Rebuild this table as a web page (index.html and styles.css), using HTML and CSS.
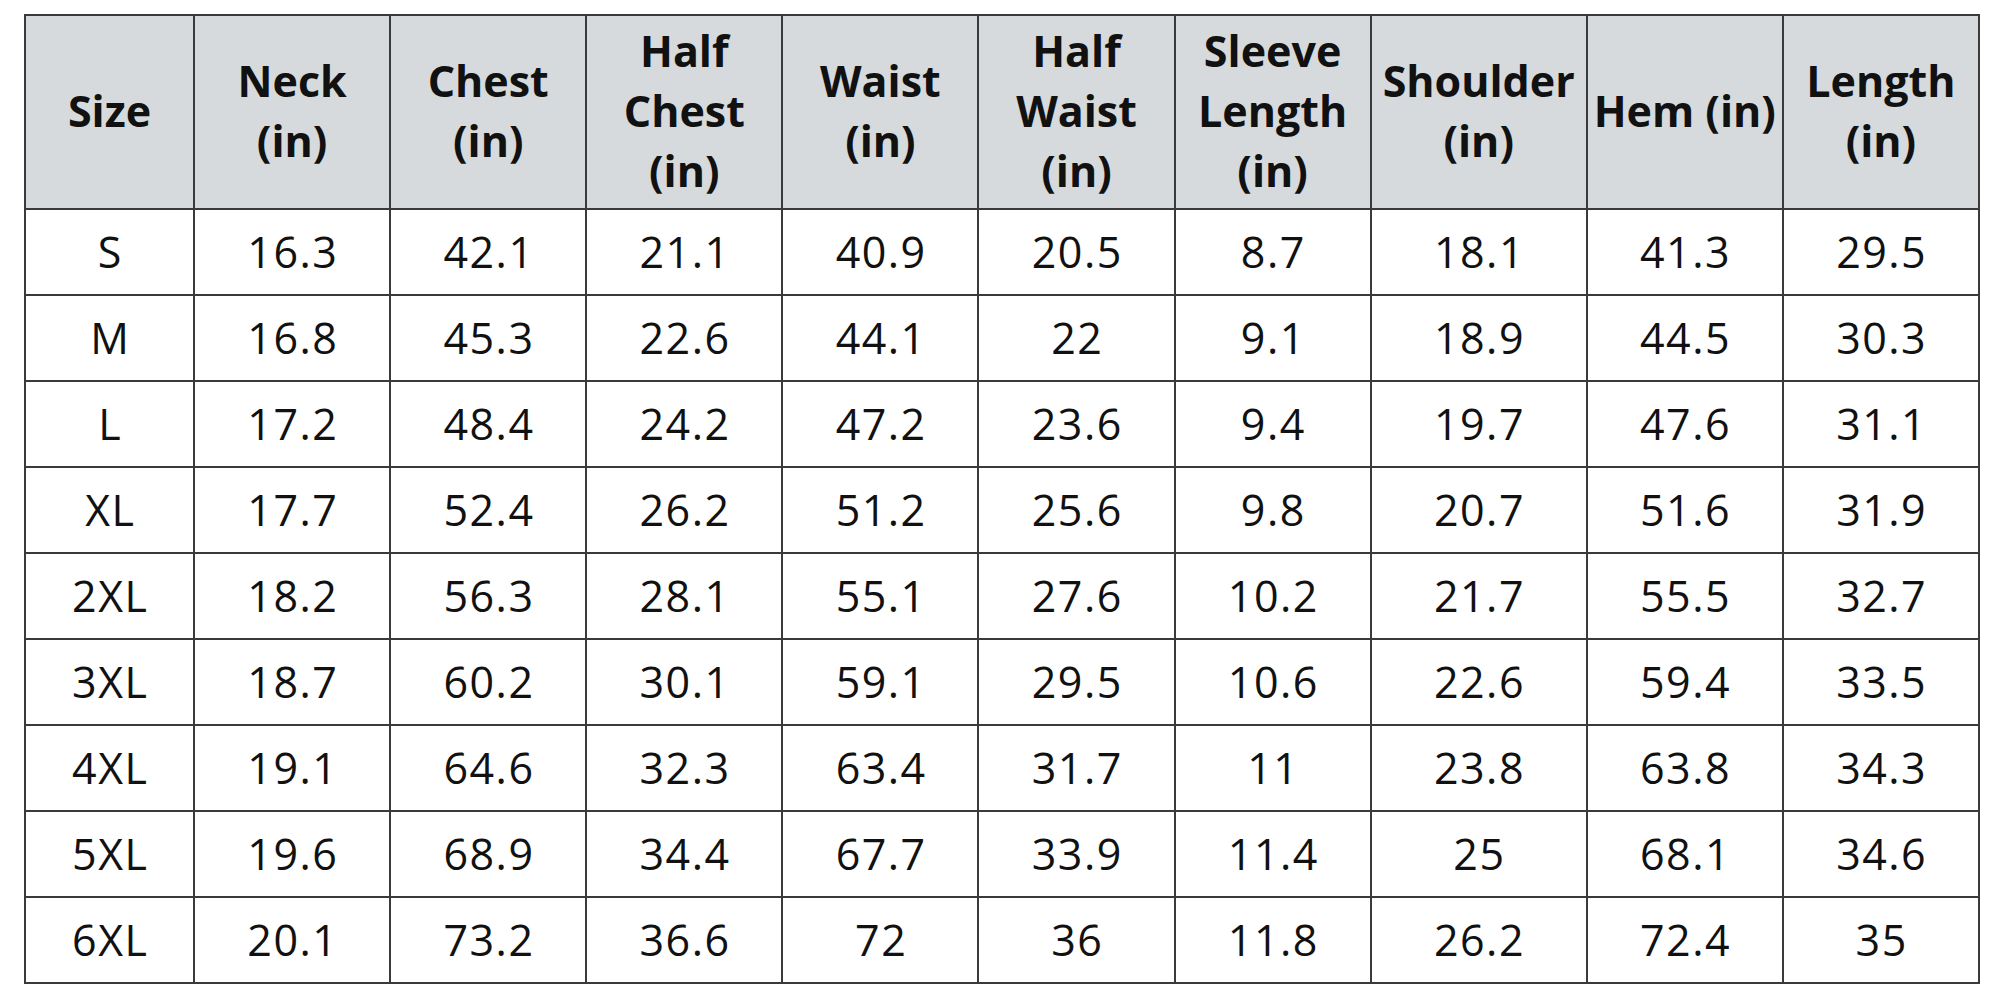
FILE: index.html
```html
<!DOCTYPE html>
<html>
<head>
<meta charset="utf-8">
<link rel="stylesheet" href="styles.css">
</head>
<body>
<table class="sizes">
<colgroup>
<col class="c-size"><col class="c-std"><col class="c-std"><col class="c-std"><col class="c-std"><col class="c-std"><col class="c-std"><col class="c-wide"><col class="c-std"><col class="c-std">
</colgroup>
<thead>
<tr>
<th>Size</th>
<th>Neck<br>(in)</th>
<th>Chest<br>(in)</th>
<th>Half<br>Chest<br>(in)</th>
<th>Waist<br>(in)</th>
<th>Half<br>Waist<br>(in)</th>
<th>Sleeve<br>Length<br>(in)</th>
<th>Shoulder<br>(in)</th>
<th>Hem (in)</th>
<th>Length<br>(in)</th>
</tr>
</thead>
<tbody>
<tr><td>S</td><td>16.3</td><td>42.1</td><td>21.1</td><td>40.9</td><td>20.5</td><td>8.7</td><td>18.1</td><td>41.3</td><td>29.5</td></tr>
<tr><td>M</td><td>16.8</td><td>45.3</td><td>22.6</td><td>44.1</td><td>22</td><td>9.1</td><td>18.9</td><td>44.5</td><td>30.3</td></tr>
<tr><td>L</td><td>17.2</td><td>48.4</td><td>24.2</td><td>47.2</td><td>23.6</td><td>9.4</td><td>19.7</td><td>47.6</td><td>31.1</td></tr>
<tr><td>XL</td><td>17.7</td><td>52.4</td><td>26.2</td><td>51.2</td><td>25.6</td><td>9.8</td><td>20.7</td><td>51.6</td><td>31.9</td></tr>
<tr><td>2XL</td><td>18.2</td><td>56.3</td><td>28.1</td><td>55.1</td><td>27.6</td><td>10.2</td><td>21.7</td><td>55.5</td><td>32.7</td></tr>
<tr><td>3XL</td><td>18.7</td><td>60.2</td><td>30.1</td><td>59.1</td><td>29.5</td><td>10.6</td><td>22.6</td><td>59.4</td><td>33.5</td></tr>
<tr><td>4XL</td><td>19.1</td><td>64.6</td><td>32.3</td><td>63.4</td><td>31.7</td><td>11</td><td>23.8</td><td>63.8</td><td>34.3</td></tr>
<tr><td>5XL</td><td>19.6</td><td>68.9</td><td>34.4</td><td>67.7</td><td>33.9</td><td>11.4</td><td>25</td><td>68.1</td><td>34.6</td></tr>
<tr><td>6XL</td><td>20.1</td><td>73.2</td><td>36.6</td><td>72</td><td>36</td><td>11.8</td><td>26.2</td><td>72.4</td><td>35</td></tr>
</tbody>
</table>
</body>
</html>
```
FILE: styles.css
```css
html, body {
  margin: 0;
  padding: 0;
  background: #ffffff;
}
body {
  padding: 14px 0 0 24px;
  font-family: "Open Sans", "Noto Sans", sans-serif;
  color: #111111;
}
.sizes {
  border-collapse: collapse;
  table-layout: fixed;
  width: 1956px;
}
.c-size { width: 169px; }
.c-std { width: 196px; }
.c-wide { width: 216px; }
.sizes th,
.sizes td {
  border: 2px solid #3a3a3a;
  text-align: center;
  vertical-align: middle;
  padding: 0;
}
.sizes th {
  background: #d6dadc;
  height: 189px;
  padding-bottom: 3px;
  font-size: 43px;
  font-weight: 700;
  line-height: 60px;
}
.sizes td {
  height: 84px;
  font-size: 43px;
  font-weight: 400;
  line-height: 50px;
  letter-spacing: 1.5px;
  text-indent: 1.5px;
}
```
